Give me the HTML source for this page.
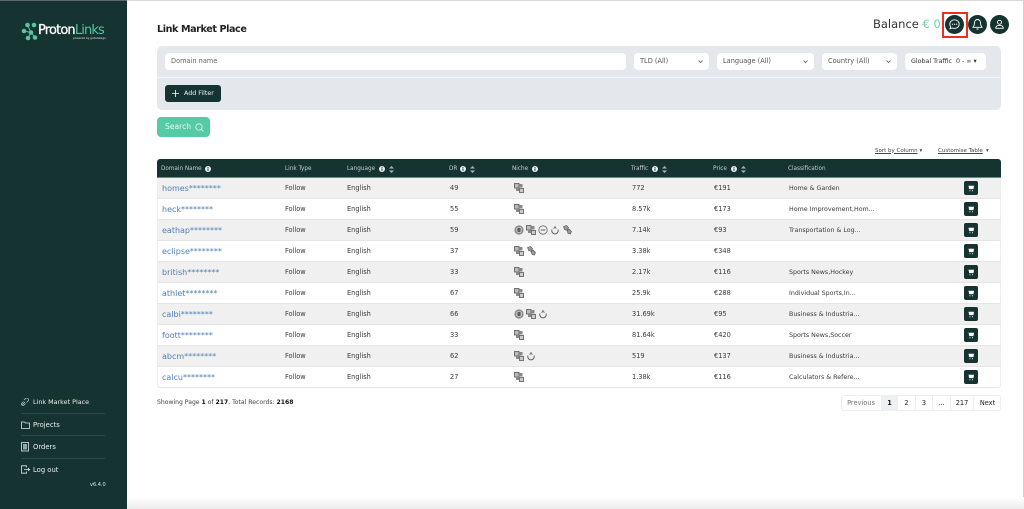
<!DOCTYPE html>
<html lang="en"><head><meta charset="utf-8"><title>Link Market Place</title>
<style>
*{box-sizing:border-box}
html{background:#fff}
html,body{margin:0;padding:0;width:1024px;height:509px;overflow:hidden}
body{position:relative;background:#fff;font-family:"DejaVu Sans","Liberation Sans",sans-serif;color:#333;font-size:6.6px;filter:blur(.3px)}
.a{position:absolute;white-space:nowrap}
#side{position:absolute;left:0;top:0;width:127px;height:509px;background:#153431}
.nav{position:absolute;left:33px;color:#e8eeec;font-size:6.600px;white-space:nowrap;line-height:10px}
.hr{position:absolute;left:21px;width:84px;height:1px;background:#2c4a47}
.sel{position:absolute;top:53px;height:17px;background:#fff;border-radius:4px;color:#555;font-size:6.600px;line-height:17px;padding-left:6px;white-space:nowrap}
.sel svg{position:absolute;right:6px;top:7px}
#thead{position:absolute;left:157px;top:159px;width:844px;height:19px;background:#153431;border-radius:3px 3px 0 0;border-bottom:1px solid #6f8683}
.th{position:absolute;top:164.500px;color:#c3cfcc;font-size:5.700px;line-height:8px;white-space:nowrap}
.r{position:absolute;left:157px;width:844px;height:21px;border-bottom:1px solid #e6e6e6;border-left:1px solid #eee;border-right:1px solid #eee;font-size:6.600px;line-height:20px;color:#3a3a3a}
.g{background:#f0f0f0}
.r span{position:absolute;top:0;white-space:nowrap}
.r .d{left:4px;top:.5px;color:#4f7fb5;font-size:8px;font-family:"DejaVu Sans",sans-serif}
.r .t{left:127px}.r .l{left:189px}.r .dr{left:292px}.r .tr{left:474px}.r .p{left:556px}.r .c{left:631px;top:.5px;font-size:6.300px}
.r svg{position:absolute}
.cart{position:absolute;left:806px;top:3px;width:14px;height:14px;background:#153431;border-radius:2px}
.cart svg{left:4px;top:4px}
.pg{position:absolute;top:395px;height:16px;text-align:center;font-size:6.600px;line-height:16px;color:#222;border-left:1px solid #eee}
</style></head><body>
<svg width="0" height="0" style="position:absolute"><defs>
<g id="tr"><rect x=".5" y=".5" width="4.500" height="4.500" fill="#bbb" stroke="#666" stroke-width=".9"/><rect x="5" y="1" width="3.500" height="3.500" fill="#888"/><rect x="2" y="5" width="3" height="3" fill="#888"/><rect x="5.500" y="5.500" width="4" height="4" fill="#ccc" stroke="#666" stroke-width=".9"/></g>
<g id="coin"><circle cx="5" cy="5" r="4.600" fill="#888"/><circle cx="5" cy="5" r="2.800" fill="none" stroke="#ddd" stroke-width=".6"/><rect x="4.200" y="3" width="1.600" height="4" fill="#555"/></g>
<g id="adult"><circle cx="5" cy="5" r="4.200" fill="none" stroke="#666" stroke-width=".8"/><rect x="2.700" y="4.300" width="4.600" height="1.400" fill="#888"/></g>
<g id="med"><path d="M5 1v2M2 4.500a3.200 3.200 0 1 0 6 0M3.500 3.500L5 2.500l1.500 1" fill="none" stroke="#666" stroke-width="1"/></g>
<g id="pill"><path d="M1.500 1.500l3-1 2 2-1 3-3-1zM5 5l2-1 2.500 2.500-1 2.500-2.500-.5z" fill="#999" stroke="#555" stroke-width=".6"/></g>
<g id="cart"><path d="M.5 .8h5.500l-.5 3.300H1.200zM1.500 5.200h.9v1h-.9zM4 5.200h.9v1H4z" fill="#fff"/></g>
<g id="info"><circle cx="3" cy="3" r="3" fill="#eef2f1"/><rect x="2.500" y="2.500" width="1" height="2.300" fill="#153431"/><rect x="2.500" y="1.100" width="1" height="1" fill="#153431"/></g>
<g id="sort"><path d="M2.500 0L5 2.500H0zM2.500 7L5 4.500H0z" fill="#a9b8b5"/></g>
<path id="chev" d="M.5 .5L2.500 2.500L4.500 .5" fill="none" stroke="#555" stroke-width=".8"/>
</defs></svg>

<div id="side"></div>
<div class="a" style="left:0;top:0;width:1024px;height:1px;background:#d9d9d9"></div>
<div class="a" style="left:0;top:0;width:127px;height:1px;background:#666"></div>
<div class="a" style="left:1023px;top:0;width:1px;height:509px;background:#d9cdd6"></div>
<div class="a" style="left:127px;top:497px;width:897px;height:12px;background:linear-gradient(#fff,#ececec)"></div>

<svg class="a" style="left:21px;top:22px" width="20" height="19" viewBox="0 0 20 19"><g fill="#56c5a0"><circle cx="6.500" cy="3" r="2.300"/><circle cx="13" cy="3" r="2.300"/><circle cx="3" cy="9" r="2.300"/><circle cx="10" cy="10.500" r="2.300"/><circle cx="7" cy="16" r="2.300"/><circle cx="14" cy="15.500" r="2.300"/></g><path d="M6.500 3L10 10.500L3 9M10 10.500L14 15.500M10 10.500L7 16" stroke="#56c5a0" fill="none"/></svg>
<div class="a" style="left:38px;top:23px;font:normal 13px/16px 'DejaVu Sans',sans-serif;letter-spacing:-.85px;color:#fff"><span style="-webkit-text-stroke:.25px #fff">Proton</span><span style="color:#56c5a0">Links</span></div>
<div class="a" style="left:73px;top:37px;font-size:2.800px;line-height:3px;color:#dfe6e4">powered by gotodesign</div>

<svg class="a" style="left:21px;top:398px" width="8" height="8" viewBox="0 0 8 8"><path d="M1 7l3-3M3 2l1.500-1.500a1.400 1.400 0 0 1 2.500 2.500L5.500 4.500M2.500 3.500L1 5a1.400 1.400 0 0 0 2 2l1.500-1.500" fill="none" stroke="#b8c6c3" stroke-width=".8"/></svg>
<div class="nav" style="top:397px;font-size:6.400px">Link Market Place</div>
<div class="hr" style="top:413px"></div>
<svg class="a" style="left:21px;top:421px" width="9" height="8" viewBox="0 0 9 8"><path d="M.5 1h3l1 1h4v5.500h-8z" fill="none" stroke="#dfe6e4" stroke-width=".8"/></svg>
<div class="nav" style="top:419.500px;font-size:6.800px">Projects</div>
<div class="hr" style="top:435px"></div>
<svg class="a" style="left:21px;top:442px" width="8" height="10" viewBox="0 0 8 10"><rect x=".5" y=".5" width="7" height="8.500" fill="none" stroke="#dfe6e4" stroke-width=".8"/><rect x="2" y="2" width="4" height="5.500" fill="#8fa5a1"/></svg>
<div class="nav" style="top:441.500px;font-size:6.800px">Orders</div>
<div class="hr" style="top:458px"></div>
<svg class="a" style="left:21px;top:465px" width="9" height="9" viewBox="0 0 9 9"><path d="M5.500 2.500V.8h-5v7.400h5V6.500M3 4.500h5.500M7 3l1.500 1.500L7 6" fill="none" stroke="#dfe6e4" stroke-width=".8"/></svg>
<div class="nav" style="top:464.500px;font-size:6.800px">Log out</div>
<div class="a" style="left:90px;top:480.500px;font-size:5px;line-height:8px;color:#dfe6e4">v6.4.0</div>

<div class="a" style="left:157px;top:22.500px;font:bold 9.600px/14px 'DejaVu Sans',sans-serif;color:#222;letter-spacing:-.4px">Link Market Place</div>

<div class="a" style="left:873px;top:16px;font-size:11.500px;line-height:17px;color:#333">Balance <span style="color:#6dcfae">€ 0</span></div>
<div class="a" style="left:942px;top:12px;width:26px;height:26px;border:2px solid #e8301c"></div>
<div class="a" style="left:945px;top:15px;width:19px;height:19px;border-radius:50%;background:#153431"></div>
<svg class="a" style="left:949px;top:19px" width="11" height="11" viewBox="0 0 11 11"><path d="M5.500 .8c2.700 0 4.700 1.900 4.700 4.300s-2 4.300-4.700 4.300c-.8 0-1.500-.1-2.200-.4L1 9.800l.6-2.100C1 6.900.8 6 .8 5.100.8 2.700 2.800.8 5.500.8z" fill="none" stroke="#fff" stroke-width=".9"/><circle cx="3.500" cy="5.200" r=".6" fill="#fff"/><circle cx="5.500" cy="5.200" r=".6" fill="#fff"/><circle cx="7.500" cy="5.200" r=".6" fill="#fff"/></svg>
<div class="a" style="left:968px;top:15px;width:19px;height:19px;border-radius:50%;background:#153431"></div>
<svg class="a" style="left:972px;top:18px" width="11" height="13" viewBox="0 0 11 13"><path d="M5.500 1.500c-2 0-3 1.500-3 3.500 0 2.500-1 3.500-1.500 4.300h9C9.500 8.500 8.500 7.500 8.500 5c0-2-1-3.500-3-3.500zM4.500 11h2" fill="none" stroke="#fff" stroke-width=".9"/></svg>
<div class="a" style="left:990px;top:15px;width:19px;height:19px;border-radius:50%;background:#153431"></div>
<svg class="a" style="left:994px;top:19px" width="11" height="11" viewBox="0 0 11 11"><circle cx="5.500" cy="3.300" r="2" fill="none" stroke="#fff" stroke-width=".9"/><path d="M1.800 9.300c0-2 1.500-3 3.700-3s3.700 1 3.700 3z" fill="none" stroke="#fff" stroke-width=".9"/></svg>

<div class="a" style="left:157px;top:46px;width:844px;height:64px;background:#e4e7ec;border-radius:5px"></div>
<div class="a" style="left:157px;top:77px;width:844px;height:1px;background:#f4f5f7"></div>
<div class="sel" style="left:165px;width:461px;color:#666">Domain name</div>
<div class="sel" style="left:634px;width:75px;padding-left:6px">TLD (All)<svg width="5" height="4" viewBox="0 0 5 4"><use href="#chev"/></svg></div>
<div class="sel" style="left:717px;width:97px">Language (All)<svg width="5" height="4" viewBox="0 0 5 4"><use href="#chev"/></svg></div>
<div class="sel" style="left:822px;width:75px">Country (All)<svg width="5" height="4" viewBox="0 0 5 4"><use href="#chev"/></svg></div>
<div class="sel" style="left:905px;width:81px;color:#333;font-size:6.300px">Global Traffic&nbsp; 0 - ∞ ▾</div>

<div class="a" style="left:165px;top:85px;width:56px;height:17px;background:#153431;border-radius:3px;color:#eef2f1;font-size:6.300px;line-height:17px;padding-left:19px">Add Filter</div>
<svg class="a" style="left:172px;top:90px" width="7" height="7" viewBox="0 0 7 7"><path d="M3.500 0v7M0 3.500h7" stroke="#fff" stroke-width=".8"/></svg>

<div class="a" style="left:157px;top:117px;width:53px;height:20px;background:#56c9a5;border-radius:4px;color:#eef9f5;font-size:7.600px;line-height:20px;padding-left:8px">Search</div>
<svg class="a" style="left:195px;top:123px" width="9" height="9" viewBox="0 0 9 9"><circle cx="4" cy="4" r="3.200" fill="none" stroke="#e6f7f1" stroke-width=".8"/><path d="M6.300 6.300L8.500 8.500" stroke="#e6f7f1" stroke-width=".8"/></svg>

<div class="a" style="left:875px;top:146.500px;font-size:5.500px;line-height:8px;color:#444;text-decoration:underline">Sort by Column</div><div class="a" style="left:919.500px;top:146.500px;font-size:5.500px;line-height:8px;color:#444">▾</div>
<div class="a" style="left:938px;top:146.500px;font-size:5.500px;line-height:8px;color:#444;text-decoration:underline">Customise Table</div><div class="a" style="left:986px;top:146.500px;font-size:5.500px;line-height:8px;color:#444">▾</div>

<div id="thead"></div>
<div class="th" style="left:161px">Domain Name</div><svg class="a" style="left:205px;top:166px" width="6" height="6"><use href="#info"/></svg>
<div class="th" style="left:285px">Link Type</div>
<div class="th" style="left:347px">Language</div><svg class="a" style="left:379px;top:166px" width="6" height="6"><use href="#info"/></svg><svg class="a" style="left:389px;top:165.500px" width="5" height="7"><use href="#sort"/></svg>
<div class="th" style="left:449px">DR</div><svg class="a" style="left:460px;top:166px" width="6" height="6"><use href="#info"/></svg><svg class="a" style="left:470px;top:165.500px" width="5" height="7"><use href="#sort"/></svg>
<div class="th" style="left:512px">Niche</div><svg class="a" style="left:532px;top:166px" width="6" height="6"><use href="#info"/></svg>
<div class="th" style="left:631px">Traffic</div><svg class="a" style="left:652px;top:166px" width="6" height="6"><use href="#info"/></svg><svg class="a" style="left:662px;top:165.500px" width="5" height="7"><use href="#sort"/></svg>
<div class="th" style="left:713px">Price</div><svg class="a" style="left:731px;top:166px" width="6" height="6"><use href="#info"/></svg><svg class="a" style="left:741px;top:165.500px" width="5" height="7"><use href="#sort"/></svg>
<div class="th" style="left:788px">Classification</div>

<div class="r g" style="top:178px"><span class="d">homes********</span><span class="t">Follow</span><span class="l">English</span><span class="dr">49</span><svg style="left:356px;top:5px" width="10" height="10"><use href="#tr"/></svg><span class="tr">772</span><span class="p">€191</span><span class="c">Home &amp; Garden</span><div class="cart"><svg width="7" height="7"><use href="#cart"/></svg></div></div>
<div class="r" style="top:199px"><span class="d">heck********</span><span class="t">Follow</span><span class="l">English</span><span class="dr">55</span><svg style="left:356px;top:5px" width="10" height="10"><use href="#tr"/></svg><span class="tr">8.57k</span><span class="p">€173</span><span class="c">Home Improvement,Hom...</span><div class="cart"><svg width="7" height="7"><use href="#cart"/></svg></div></div>
<div class="r g" style="top:220px"><span class="d">eathap********</span><span class="t">Follow</span><span class="l">English</span><span class="dr">59</span><svg style="left:356px;top:5px" width="10" height="10"><use href="#coin"/></svg><svg style="left:368px;top:5px" width="10" height="10"><use href="#tr"/></svg><svg style="left:380px;top:5px" width="10" height="10"><use href="#adult"/></svg><svg style="left:392px;top:5px" width="10" height="10"><use href="#med"/></svg><svg style="left:404px;top:5px" width="10" height="10"><use href="#pill"/></svg><span class="tr">7.14k</span><span class="p">€93</span><span class="c">Transportation &amp; Log...</span><div class="cart"><svg width="7" height="7"><use href="#cart"/></svg></div></div>
<div class="r" style="top:241px"><span class="d">eclipse********</span><span class="t">Follow</span><span class="l">English</span><span class="dr">37</span><svg style="left:356px;top:5px" width="10" height="10"><use href="#tr"/></svg><svg style="left:368px;top:5px" width="10" height="10"><use href="#pill"/></svg><span class="tr">3.38k</span><span class="p">€348</span><div class="cart"><svg width="7" height="7"><use href="#cart"/></svg></div></div>
<div class="r g" style="top:262px"><span class="d">british********</span><span class="t">Follow</span><span class="l">English</span><span class="dr">33</span><svg style="left:356px;top:5px" width="10" height="10"><use href="#tr"/></svg><span class="tr">2.17k</span><span class="p">€116</span><span class="c">Sports News,Hockey</span><div class="cart"><svg width="7" height="7"><use href="#cart"/></svg></div></div>
<div class="r" style="top:283px"><span class="d">athlet********</span><span class="t">Follow</span><span class="l">English</span><span class="dr">67</span><svg style="left:356px;top:5px" width="10" height="10"><use href="#tr"/></svg><span class="tr">25.9k</span><span class="p">€288</span><span class="c">Individual Sports,In...</span><div class="cart"><svg width="7" height="7"><use href="#cart"/></svg></div></div>
<div class="r g" style="top:304px"><span class="d">calbi********</span><span class="t">Follow</span><span class="l">English</span><span class="dr">66</span><svg style="left:356px;top:5px" width="10" height="10"><use href="#coin"/></svg><svg style="left:368px;top:5px" width="10" height="10"><use href="#tr"/></svg><svg style="left:380px;top:5px" width="10" height="10"><use href="#med"/></svg><span class="tr">31.69k</span><span class="p">€95</span><span class="c">Business &amp; Industria...</span><div class="cart"><svg width="7" height="7"><use href="#cart"/></svg></div></div>
<div class="r" style="top:325px"><span class="d">foott********</span><span class="t">Follow</span><span class="l">English</span><span class="dr">33</span><svg style="left:356px;top:5px" width="10" height="10"><use href="#tr"/></svg><span class="tr">81.64k</span><span class="p">€420</span><span class="c">Sports News,Soccer</span><div class="cart"><svg width="7" height="7"><use href="#cart"/></svg></div></div>
<div class="r g" style="top:346px"><span class="d">abcm********</span><span class="t">Follow</span><span class="l">English</span><span class="dr">62</span><svg style="left:356px;top:5px" width="10" height="10"><use href="#tr"/></svg><svg style="left:368px;top:5px" width="10" height="10"><use href="#med"/></svg><span class="tr">519</span><span class="p">€137</span><span class="c">Business &amp; Industria...</span><div class="cart"><svg width="7" height="7"><use href="#cart"/></svg></div></div>
<div class="r" style="top:367px;border-radius:0 0 3px 3px"><span class="d">calcu********</span><span class="t">Follow</span><span class="l">English</span><span class="dr">27</span><svg style="left:356px;top:5px" width="10" height="10"><use href="#tr"/></svg><span class="tr">1.38k</span><span class="p">€116</span><span class="c">Calculators &amp; Refere...</span><div class="cart"><svg width="7" height="7"><use href="#cart"/></svg></div></div>

<div class="a" style="left:157px;top:398px;font-size:6.100px;line-height:9px;color:#444">Showing Page <b style="color:#111">1</b> of <b style="color:#111">217</b>, Total Records: <b style="color:#111">2168</b></div>

<div class="a" style="left:841px;top:395px;width:160px;height:16px;border:1px solid #eee;border-radius:3px"></div>
<div class="pg" style="left:841px;width:40px;border-left:0;color:#777">Previous</div>
<div class="pg" style="left:881px;width:16px;background:#eef0f3;font-weight:bold">1</div>
<div class="pg" style="left:897px;width:18px">2</div>
<div class="pg" style="left:915px;width:17px">3</div>
<div class="pg" style="left:932px;width:18px">...</div>
<div class="pg" style="left:950px;width:23px">217</div>
<div class="pg" style="left:973px;width:28px">Next</div>
</body></html>
